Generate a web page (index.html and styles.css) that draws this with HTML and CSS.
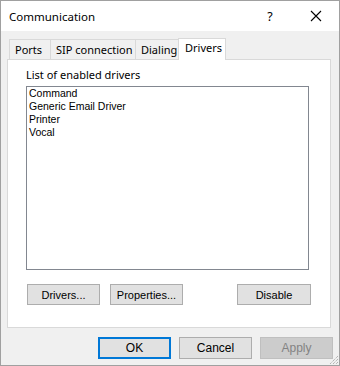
FILE: index.html
```html
<!DOCTYPE html>
<html>
<head>
<meta charset="utf-8">
<link rel="stylesheet" href="styles.css">
</head>
<body>
<div class="window">
  <div class="titlebar">
    <span class="title">Communication</span>
    <span class="help">?</span>
    <span class="close">
      <svg width="12" height="12" viewBox="0 0 12 12"><path d="M1 1L11 11M11 1L1 11" stroke="#000" stroke-width="1.1" fill="none"/></svg>
    </span>
  </div>
  <div class="client">
    <div class="tabs">
      <div class="tab t-ports">Ports</div>
      <div class="tab t-sip">SIP connection</div>
      <div class="tab t-dial">Dialing</div>
      <div class="tab t-drv active">Drivers</div>
    </div>
    <div class="panel">
      <div class="label">List of enabled drivers</div>
      <div class="listbox">
        <div class="item">Command</div>
        <div class="item">Generic Email Driver</div>
        <div class="item">Printer</div>
        <div class="item">Vocal</div>
      </div>
      <div class="btnrow">
        <div class="btn">Drivers...</div>
        <div class="btn">Properties...</div>
        <div class="spacer"></div>
        <div class="btn">Disable</div>
      </div>
    </div>
    <div class="footer">
      <div class="btn big default">OK</div>
      <div class="btn big">Cancel</div>
      <div class="btn big disabled">Apply</div>
    </div>
    <svg class="grip" width="11" height="11" viewBox="0 0 11 11">
      <path d="M10 2L2 10M10 5L5 10M10 8L8 10" stroke="#9a9a9a" stroke-width="1" stroke-dasharray="1 1" fill="none"/>
    </svg>
  </div>
</div>
</body>
</html>
```
FILE: styles.css
```css
html, body { margin: 0; padding: 0; }
body { background: #f0f0f0; }
.window {
  width: 340px; height: 366px; box-sizing: border-box;
  border: 1px solid #a0a0a0;
  display: flex; flex-direction: column;
  font-family: "Noto Sans", "Liberation Sans", sans-serif;
}
.titlebar {
  height: 30px; background: #fff; display: flex; align-items: center;
  flex: none;
}
.title { font-size: 11.5px; color: #000; margin-left: 8px; flex: 1; white-space: nowrap; }
.help { font-size: 12.5px; width: 46px; text-align: center; margin-right: 0; }
.close { width: 46px; height: 30px; display: flex; align-items: center; justify-content: center; }
.client {
  flex: 1; background: #f0f0f0; position: relative;
  padding: 7px 8px 0 6px;
  display: flex; flex-direction: column;
}
.tabs { display: flex; height: 21px; align-items: flex-end; margin-left: 2px; position: relative; z-index: 1; }
.tab {
  box-sizing: border-box; height: 20px; border: 1px solid #d9d9d9; border-bottom: none;
  background: #f0f0f0; font-size: 11px; line-height: 19px; padding-left: 5px; color: #000;
  margin-right: -1px; white-space: nowrap;
}
.t-ports { width: 42px; }
.t-sip { width: 86px; }
.t-dial { width: 44px; }
.t-drv { width: 48px; }
.tab.active { height: 22px; background: #fff; margin-bottom: -1px; line-height: 18px; padding-left: 6px; }
.panel {
  box-sizing: border-box; width: 324px; height: 269px;
  background: #fff; border: 1px solid #d9d9d9;
  padding: 7px 0 0 18px;
  display: flex; flex-direction: column;
}
.label { font-size: 11px; line-height: 15px; height: 19px; color: #000; white-space: nowrap; }
.listbox {
  box-sizing: border-box; width: 283px; height: 184px;
  border: 1px solid #828790; background: #fff;
  font-family: "Liberation Sans", Arial, sans-serif; font-size: 10.5px;
  padding-left: 2px;
}
.item { height: 13px; line-height: 13px; white-space: nowrap; }
.btnrow { display: flex; margin-top: 14px; padding-left: 1px; width: 284px; }
.btnrow .btn + .btn { margin-left: 10px; }
.spacer { flex: 1; }
.btn {
  box-sizing: border-box; width: 73px; height: 21px;
  background: #e1e1e1; border: 1px solid #adadad;
  font-family: "Liberation Sans", Arial, sans-serif; font-size: 11px;
  display: flex; align-items: center; justify-content: center; color: #000;
  white-space: nowrap;
}
.btnrow .spacer + .btn { margin-left: 0; width: 74px; }
.footer { display: flex; justify-content: flex-end; margin-top: 9px; gap: 8px; margin-right: -2px; }
.btn.big { height: 22px; font-size: 12px; }
.btn.default { border: 2px solid #0078d7; }
.btn.disabled { background: #cccccc; border-color: #bfbfbf; color: #838383; }
.grip { position: absolute; right: 0; bottom: 0; }
```
